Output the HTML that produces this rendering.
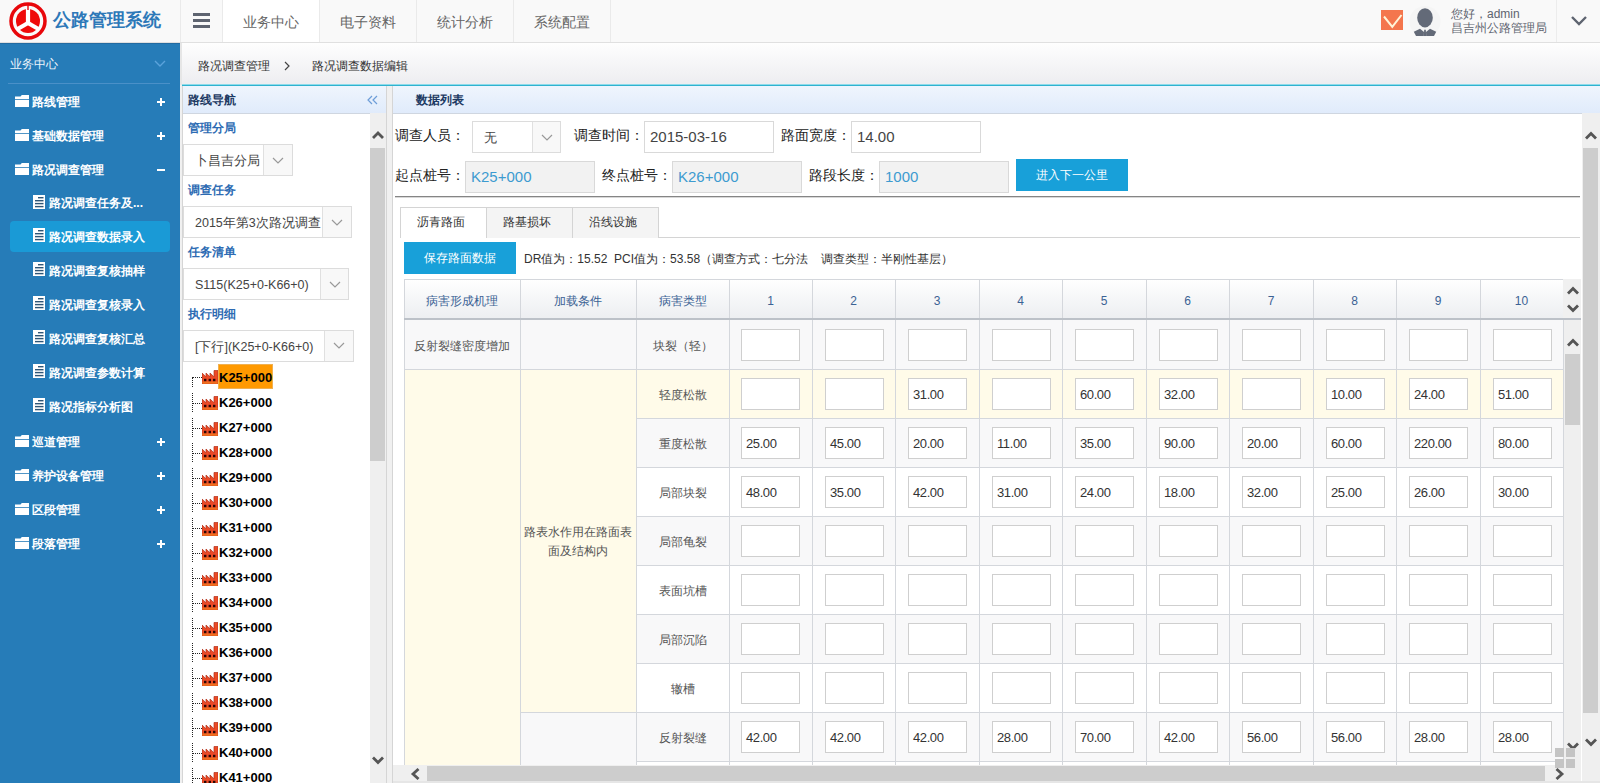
<!DOCTYPE html>
<html><head><meta charset="utf-8">
<style>
*{margin:0;padding:0;box-sizing:border-box}
html,body{width:1600px;height:783px;overflow:hidden;background:#f0f0f0;font-family:"Liberation Sans",sans-serif;color:#333}
.a{position:absolute}
#hdr{left:0;top:0;width:1600px;height:43px;background:#f9f9f9;border-bottom:1px solid #e0e0e0}
.tab{top:0;height:42px;border-left:1px solid #eaeaea;font-size:14px;color:#666;line-height:44px;text-align:center}
#side{left:0;top:43px;width:180px;height:740px;background:#267cb8}
.sm{left:0;width:180px;height:34px;color:#fff;font-size:12px;line-height:34px}
.sm .t{position:absolute;left:32px;top:0}
.sm .pl{position:absolute;left:155px;top:0;font-weight:bold;font-size:16px}
.fold{position:absolute;left:15px;top:12px;width:14px;height:12px}
.doc{position:absolute;left:33px;top:10px;width:12px;height:14px}
.sub .t{left:49px}
#crumb{left:180px;top:43px;width:1420px;height:42px;background:linear-gradient(#fefefe,#ededf0);border-left:2px solid #e6e6e6;font-size:12px;color:#333}
#cyan{left:182px;top:84px;width:1418px;height:2px;background:linear-gradient(#8ddbea 50%,#2fb2cf 50%)}
#lp{left:182px;top:86px;width:205px;height:697px;background:#fff;border-left:1px solid #d5d5d5;border-right:1px solid #d5d5d5}
#mp{left:392px;top:86px;width:1208px;height:697px;background:#fff;border-left:1px solid #d5d5d5}
.ph{position:absolute;left:0;top:0;right:0;background:linear-gradient(#eff5fd,#e0ebfb);border-bottom:1px solid #cfd6e0;height:28px;font-size:12px;font-weight:bold;color:#1d3a63;line-height:28px}
.lab{font-size:12px;font-weight:bold;color:#2d6bb3;line-height:16px}
.sel{border:1px solid #dcdcdc;background:#fff}
.st{left:11px;top:1px;line-height:30px;font-size:12.5px;color:#444;white-space:nowrap}
.sa{top:0;bottom:0;background:#f8f8f8;border-left:1px solid #e0e0e0}
.dv{width:1px;border-left:1px dotted #222}
.dh{height:1px;border-top:1px dotted #222}
.kt{font-size:13px;font-weight:bold;color:#000;line-height:16px;font-family:"Liberation Sans",sans-serif}
.flab{font-size:14px;line-height:20px;color:#222;white-space:nowrap}
.fin{border:1px solid #d9d9d9;background:#fff;font-size:15px;line-height:29px;padding-left:5px;color:#444;white-space:nowrap}
.ro{background:#f2f2f2;color:#3d9bd0}
.btn{background:#18a0d9;color:#fff;font-size:12px;text-align:center;line-height:31px}
.tb{height:31px;border:1px solid #d4d4d4;border-bottom:none;background:#f4f4f4;font-size:12px;padding-right:6px;color:#333;text-align:center;line-height:29px}
.tb.act{background:#fff;height:31px}
.th{font-size:12px;line-height:18px;color:#3b6294;text-align:center}
.td{font-size:12px;line-height:18px;color:#555;text-align:center;white-space:nowrap}
.ci{width:59px;height:32px;border:1px solid #cfcfcf;background:#fff;font-size:13px;letter-spacing:-0.4px;line-height:30px;padding-left:4px;padding-top:1px;color:#333}
</style></head><body>
<!-- HEADER -->
<div id="hdr" class="a">
  <svg class="a" style="left:8px;top:1px" width="40" height="40" viewBox="0 0 40 40">
    <circle cx="20" cy="20" r="12" fill="#ef0a0a"/>
    <g stroke="#fff" stroke-width="4.2" stroke-linecap="butt">
      <line x1="20" y1="22" x2="20" y2="6"/>
      <line x1="20" y1="22" x2="7" y2="29.5"/>
      <line x1="20" y1="22" x2="33" y2="29.5"/>
    </g>
    <circle cx="20" cy="20" r="17" fill="none" stroke="#e8070b" stroke-width="3.5"/>
    <line x1="20" y1="3" x2="20" y2="9" stroke="#e8070b" stroke-width="1.4"/>
  </svg>
  <div class="a" style="left:53px;top:8px;font-size:18px;font-weight:bold;color:#2d78b8;letter-spacing:0px;line-height:24px">公路管理系统</div>
  <div class="a tab" style="left:180px;width:42px;background:#f9f9f9">
    <div class="a" style="left:12px;top:13px;width:17px;height:3px;background:#5e6470"></div>
    <div class="a" style="left:12px;top:19px;width:17px;height:3px;background:#5e6470"></div>
    <div class="a" style="left:12px;top:25px;width:17px;height:3px;background:#5e6470"></div>
  </div>
  <div class="a tab" style="left:222px;width:97px;background:#fff">业务中心</div>
  <div class="a tab" style="left:319px;width:97px">电子资料</div>
  <div class="a tab" style="left:416px;width:97px">统计分析</div>
  <div class="a tab" style="left:513px;width:97px">系统配置</div>
  <div class="a tab" style="left:610px;width:1px"></div>
  <!-- mail -->
  <svg class="a" style="left:1381px;top:10px" width="22" height="20" viewBox="0 0 22 20">
    <rect width="22" height="20" fill="#f4764d"/>
    <polyline points="3,6.5 11.3,16.8 20.5,5" fill="none" stroke="#fff4d8" stroke-width="2"/>
  </svg>
  <!-- avatar -->
  <svg class="a" style="left:1409px;top:5px" width="32" height="33" viewBox="0 0 32 33">
    <circle cx="16" cy="16.5" r="15.5" fill="#f5f5f5"/>
    <ellipse cx="16" cy="12.8" rx="7.8" ry="9.6" fill="#636a78"/>
    <path d="M4.8 26.8 L11 23.8 L15 27 L14.8 31 L7 31 Z" fill="#636a78"/>
    <path d="M27.2 26.8 L21 23.8 L17 27 L17.2 31 L25 31 Z" fill="#636a78"/>
    <path d="M15.2 24.8 L16.8 24.8 L17.2 31 L14.8 31 Z" fill="#636a78"/>
  </svg>
  <div class="a" style="left:1451px;top:8px;font-size:12px;color:#5e6470;line-height:13.5px">您好，admin<br>昌吉州公路管理局</div>
  <div class="a" style="left:1556px;top:0;width:1px;height:42px;background:#ececec"></div>
  <svg class="a" style="left:1570px;top:15px" width="18" height="12" viewBox="0 0 18 12">
    <polyline points="2,2 9,9 16,2" fill="none" stroke="#5e6470" stroke-width="2.4"/>
  </svg>
</div>

<!-- SIDEBAR -->
<div id="side" class="a">
  <div class="a" style="left:0;top:0;width:180px;height:1px;background:#236ba2"></div>
  <div class="a" style="left:10px;top:12px;color:#eef5fc;font-size:12px;line-height:18px">业务中心</div>
  <svg class="a" style="left:154px;top:17px" width="12" height="8" viewBox="0 0 12 8"><polyline points="1,1 6,6 11,1" fill="none" stroke="#5ba3db" stroke-width="1.4"/></svg>
  <div class="a" style="left:8px;top:40px;width:162px;height:1px;background:#4a90c8"></div>
  <svg class="a" style="left:15px;top:52px" width="14" height="12" viewBox="0 0 14 12"><path d="M0 1.6 H5.5 L6.8 0 H14 V4 H0 Z" fill="#fff"/><rect x="0" y="4.8" width="14" height="7.2" fill="#fff"/></svg>
  <div class="a" style="left:32px;top:51.0px;font-size:12px;line-height:16px;color:#fff;font-weight:bold">路线管理</div>
  <div class="a" style="left:157px;top:58.0px;width:8px;height:2px;background:#fff"></div><div class="a" style="left:160px;top:55.0px;width:2px;height:8px;background:#fff"></div>
  <svg class="a" style="left:15px;top:86px" width="14" height="12" viewBox="0 0 14 12"><path d="M0 1.6 H5.5 L6.8 0 H14 V4 H0 Z" fill="#fff"/><rect x="0" y="4.8" width="14" height="7.2" fill="#fff"/></svg>
  <div class="a" style="left:32px;top:85.0px;font-size:12px;line-height:16px;color:#fff;font-weight:bold">基础数据管理</div>
  <div class="a" style="left:157px;top:92.0px;width:8px;height:2px;background:#fff"></div><div class="a" style="left:160px;top:89.0px;width:2px;height:8px;background:#fff"></div>
  <svg class="a" style="left:15px;top:120px" width="14" height="12" viewBox="0 0 14 12"><path d="M0 1.6 H5.5 L6.8 0 H14 V4 H0 Z" fill="#fff"/><rect x="0" y="4.8" width="14" height="7.2" fill="#fff"/></svg>
  <div class="a" style="left:32px;top:119.0px;font-size:12px;line-height:16px;color:#fff;font-weight:bold">路况调查管理</div>
  <div class="a" style="left:157px;top:126.0px;width:8px;height:2px;background:#fff"></div>
  <svg class="a" style="left:33px;top:152px" width="12" height="14" viewBox="0 0 12 14"><rect width="12" height="14" fill="#fff"/><rect x="5" y="2" width="5.5" height="1.4" fill="#2f5677"/><rect x="2" y="5" width="8.5" height="1.4" fill="#2f5677"/><rect x="2" y="7.9" width="8.5" height="1.4" fill="#2f5677"/><rect x="2" y="10.9" width="8.5" height="1.4" fill="#2f5677"/></svg>
  <div class="a" style="left:49px;top:152.0px;font-size:12px;line-height:16px;color:#fff;font-weight:bold">路况调查任务及...</div>
  <div class="a" style="left:10px;top:177.5px;width:160px;height:31px;border-radius:4px;background:#1a9ad6"></div>
  <svg class="a" style="left:33px;top:185px" width="12" height="14" viewBox="0 0 12 14"><rect width="12" height="14" fill="#fff"/><rect x="5" y="2" width="5.5" height="1.4" fill="#2f5677"/><rect x="2" y="5" width="8.5" height="1.4" fill="#2f5677"/><rect x="2" y="7.9" width="8.5" height="1.4" fill="#2f5677"/><rect x="2" y="10.9" width="8.5" height="1.4" fill="#2f5677"/></svg>
  <div class="a" style="left:49px;top:185.5px;font-size:12px;line-height:16px;color:#fff;font-weight:bold">路况调查数据录入</div>
  <svg class="a" style="left:33px;top:219px" width="12" height="14" viewBox="0 0 12 14"><rect width="12" height="14" fill="#fff"/><rect x="5" y="2" width="5.5" height="1.4" fill="#2f5677"/><rect x="2" y="5" width="8.5" height="1.4" fill="#2f5677"/><rect x="2" y="7.9" width="8.5" height="1.4" fill="#2f5677"/><rect x="2" y="10.9" width="8.5" height="1.4" fill="#2f5677"/></svg>
  <div class="a" style="left:49px;top:219.5px;font-size:12px;line-height:16px;color:#fff;font-weight:bold">路况调查复核抽样</div>
  <svg class="a" style="left:33px;top:253px" width="12" height="14" viewBox="0 0 12 14"><rect width="12" height="14" fill="#fff"/><rect x="5" y="2" width="5.5" height="1.4" fill="#2f5677"/><rect x="2" y="5" width="8.5" height="1.4" fill="#2f5677"/><rect x="2" y="7.9" width="8.5" height="1.4" fill="#2f5677"/><rect x="2" y="10.9" width="8.5" height="1.4" fill="#2f5677"/></svg>
  <div class="a" style="left:49px;top:253.5px;font-size:12px;line-height:16px;color:#fff;font-weight:bold">路况调查复核录入</div>
  <svg class="a" style="left:33px;top:287px" width="12" height="14" viewBox="0 0 12 14"><rect width="12" height="14" fill="#fff"/><rect x="5" y="2" width="5.5" height="1.4" fill="#2f5677"/><rect x="2" y="5" width="8.5" height="1.4" fill="#2f5677"/><rect x="2" y="7.9" width="8.5" height="1.4" fill="#2f5677"/><rect x="2" y="10.9" width="8.5" height="1.4" fill="#2f5677"/></svg>
  <div class="a" style="left:49px;top:287.5px;font-size:12px;line-height:16px;color:#fff;font-weight:bold">路况调查复核汇总</div>
  <svg class="a" style="left:33px;top:321px" width="12" height="14" viewBox="0 0 12 14"><rect width="12" height="14" fill="#fff"/><rect x="5" y="2" width="5.5" height="1.4" fill="#2f5677"/><rect x="2" y="5" width="8.5" height="1.4" fill="#2f5677"/><rect x="2" y="7.9" width="8.5" height="1.4" fill="#2f5677"/><rect x="2" y="10.9" width="8.5" height="1.4" fill="#2f5677"/></svg>
  <div class="a" style="left:49px;top:321.5px;font-size:12px;line-height:16px;color:#fff;font-weight:bold">路况调查参数计算</div>
  <svg class="a" style="left:33px;top:355px" width="12" height="14" viewBox="0 0 12 14"><rect width="12" height="14" fill="#fff"/><rect x="5" y="2" width="5.5" height="1.4" fill="#2f5677"/><rect x="2" y="5" width="8.5" height="1.4" fill="#2f5677"/><rect x="2" y="7.9" width="8.5" height="1.4" fill="#2f5677"/><rect x="2" y="10.9" width="8.5" height="1.4" fill="#2f5677"/></svg>
  <div class="a" style="left:49px;top:355.5px;font-size:12px;line-height:16px;color:#fff;font-weight:bold">路况指标分析图</div>
  <svg class="a" style="left:15px;top:392px" width="14" height="12" viewBox="0 0 14 12"><path d="M0 1.6 H5.5 L6.8 0 H14 V4 H0 Z" fill="#fff"/><rect x="0" y="4.8" width="14" height="7.2" fill="#fff"/></svg>
  <div class="a" style="left:32px;top:391px;font-size:12px;line-height:16px;color:#fff;font-weight:bold">巡道管理</div>
  <div class="a" style="left:157px;top:398px;width:8px;height:2px;background:#fff"></div><div class="a" style="left:160px;top:395px;width:2px;height:8px;background:#fff"></div>
  <svg class="a" style="left:15px;top:426px" width="14" height="12" viewBox="0 0 14 12"><path d="M0 1.6 H5.5 L6.8 0 H14 V4 H0 Z" fill="#fff"/><rect x="0" y="4.8" width="14" height="7.2" fill="#fff"/></svg>
  <div class="a" style="left:32px;top:425px;font-size:12px;line-height:16px;color:#fff;font-weight:bold">养护设备管理</div>
  <div class="a" style="left:157px;top:432px;width:8px;height:2px;background:#fff"></div><div class="a" style="left:160px;top:429px;width:2px;height:8px;background:#fff"></div>
  <svg class="a" style="left:15px;top:460px" width="14" height="12" viewBox="0 0 14 12"><path d="M0 1.6 H5.5 L6.8 0 H14 V4 H0 Z" fill="#fff"/><rect x="0" y="4.8" width="14" height="7.2" fill="#fff"/></svg>
  <div class="a" style="left:32px;top:459px;font-size:12px;line-height:16px;color:#fff;font-weight:bold">区段管理</div>
  <div class="a" style="left:157px;top:466px;width:8px;height:2px;background:#fff"></div><div class="a" style="left:160px;top:463px;width:2px;height:8px;background:#fff"></div>
  <svg class="a" style="left:15px;top:494px" width="14" height="12" viewBox="0 0 14 12"><path d="M0 1.6 H5.5 L6.8 0 H14 V4 H0 Z" fill="#fff"/><rect x="0" y="4.8" width="14" height="7.2" fill="#fff"/></svg>
  <div class="a" style="left:32px;top:493px;font-size:12px;line-height:16px;color:#fff;font-weight:bold">段落管理</div>
  <div class="a" style="left:157px;top:500px;width:8px;height:2px;background:#fff"></div><div class="a" style="left:160px;top:497px;width:2px;height:8px;background:#fff"></div>
</div>

<!-- BREADCRUMB -->
<div id="crumb" class="a">
  <div class="a" style="left:16px;top:15px;line-height:16px">路况调查管理</div>
  <svg class="a" style="left:101px;top:18px" width="8" height="10" viewBox="0 0 8 10"><polyline points="2,1 6,5 2,9" fill="none" stroke="#444" stroke-width="1.2"/></svg>
  <div class="a" style="left:130px;top:15px;line-height:16px">路况调查数据编辑</div>
</div>
<div id="cyan" class="a"></div>

<!-- LEFT PANEL -->
<div id="lp" class="a">
  <div class="ph"><span style="position:absolute;left:5px">路线导航</span>
  <svg class="a" style="left:184px;top:9px" width="11" height="10" viewBox="0 0 11 10"><polyline points="5,1 1,5 5,9" fill="none" stroke="#6d9dd8" stroke-width="1.2"/><polyline points="10,1 6,5 10,9" fill="none" stroke="#6d9dd8" stroke-width="1.2"/></svg>
  </div>
  <div class="a lab" style="left:5px;top:34px">管理分局</div>
  <div class="a sel" style="left:0px;top:58px;width:110px;height:32px"><div class="a st">卜昌吉分局</div><div class="a sa" style="left:79px;width:29px"><svg class="a" style="left:8px;top:12px" width="12" height="7" viewBox="0 0 12 7"><polyline points="1,1 6,6 11,1" fill="none" stroke="#999" stroke-width="1.2"/></svg></div></div>
  <div class="a lab" style="left:5px;top:96px">调查任务</div>
  <div class="a sel" style="left:0px;top:120px;width:169px;height:32px"><div class="a st">2015年第3次路况调查</div><div class="a sa" style="left:138px;width:29px"><svg class="a" style="left:8px;top:12px" width="12" height="7" viewBox="0 0 12 7"><polyline points="1,1 6,6 11,1" fill="none" stroke="#999" stroke-width="1.2"/></svg></div></div>
  <div class="a lab" style="left:5px;top:158px">任务清单</div>
  <div class="a sel" style="left:0px;top:182px;width:166px;height:32px"><div class="a st">S115(K25+0-K66+0)</div><div class="a sa" style="left:136px;width:28px"><svg class="a" style="left:8px;top:12px" width="12" height="7" viewBox="0 0 12 7"><polyline points="1,1 6,6 11,1" fill="none" stroke="#999" stroke-width="1.2"/></svg></div></div>
  <div class="a lab" style="left:5px;top:220px">执行明细</div>
  <div class="a sel" style="left:0px;top:244px;width:171px;height:32px"><div class="a st">[下行](K25+0-K66+0)</div><div class="a sa" style="left:140px;width:29px"><svg class="a" style="left:8px;top:11px" width="12" height="7" viewBox="0 0 12 7"><polyline points="1,1 6,6 11,1" fill="none" stroke="#999" stroke-width="1.2"/></svg></div></div>
  <div class="a dv" style="left:9px;top:291px;height:10px"></div>
  <div class="a dh" style="left:10px;top:291px;width:9px"></div>
  <svg class="a" style="left:19px;top:284px" width="16" height="14" viewBox="0 0 16 14"><path d="M0 14 V3 L4 6.8 V3 L8 6.8 V3 L12 6.8 V0.5 H16 V14 Z" fill="#ec4a26" stroke="#b0301a" stroke-width="0.7"/><rect x="0.3" y="11.5" width="15.4" height="2.2" fill="#f0711e"/><rect x="2" y="8.8" width="2.4" height="2.4" fill="#2a0805"/><rect x="6.6" y="8.8" width="2.4" height="2.4" fill="#2a0805"/><rect x="11" y="8.8" width="2.4" height="2.4" fill="#2a0805"/></svg>
  <div class="a" style="left:35px;top:278.0px;width:55px;height:25px;background:#ff9900;border:1px solid #f0b050"></div>
  <div class="a kt" style="left:36px;top:283.5px">K25+000</div>
  <div class="a dv" style="left:9px;top:306.5px;height:19px"></div>
  <div class="a dh" style="left:10px;top:317.0px;width:9px"></div>
  <svg class="a" style="left:19px;top:310px" width="16" height="14" viewBox="0 0 16 14"><path d="M0 14 V3 L4 6.8 V3 L8 6.8 V3 L12 6.8 V0.5 H16 V14 Z" fill="#ec4a26" stroke="#b0301a" stroke-width="0.7"/><rect x="0.3" y="11.5" width="15.4" height="2.2" fill="#f0711e"/><rect x="2" y="8.8" width="2.4" height="2.4" fill="#2a0805"/><rect x="6.6" y="8.8" width="2.4" height="2.4" fill="#2a0805"/><rect x="11" y="8.8" width="2.4" height="2.4" fill="#2a0805"/></svg>
  <div class="a kt" style="left:36px;top:308.5px">K26+000</div>
  <div class="a dv" style="left:9px;top:331.5px;height:19px"></div>
  <div class="a dh" style="left:10px;top:342.0px;width:9px"></div>
  <svg class="a" style="left:19px;top:336px" width="16" height="14" viewBox="0 0 16 14"><path d="M0 14 V3 L4 6.8 V3 L8 6.8 V3 L12 6.8 V0.5 H16 V14 Z" fill="#ec4a26" stroke="#b0301a" stroke-width="0.7"/><rect x="0.3" y="11.5" width="15.4" height="2.2" fill="#f0711e"/><rect x="2" y="8.8" width="2.4" height="2.4" fill="#2a0805"/><rect x="6.6" y="8.8" width="2.4" height="2.4" fill="#2a0805"/><rect x="11" y="8.8" width="2.4" height="2.4" fill="#2a0805"/></svg>
  <div class="a kt" style="left:36px;top:333.5px">K27+000</div>
  <div class="a dv" style="left:9px;top:356.5px;height:19px"></div>
  <div class="a dh" style="left:10px;top:367.0px;width:9px"></div>
  <svg class="a" style="left:19px;top:360px" width="16" height="14" viewBox="0 0 16 14"><path d="M0 14 V3 L4 6.8 V3 L8 6.8 V3 L12 6.8 V0.5 H16 V14 Z" fill="#ec4a26" stroke="#b0301a" stroke-width="0.7"/><rect x="0.3" y="11.5" width="15.4" height="2.2" fill="#f0711e"/><rect x="2" y="8.8" width="2.4" height="2.4" fill="#2a0805"/><rect x="6.6" y="8.8" width="2.4" height="2.4" fill="#2a0805"/><rect x="11" y="8.8" width="2.4" height="2.4" fill="#2a0805"/></svg>
  <div class="a kt" style="left:36px;top:358.5px">K28+000</div>
  <div class="a dv" style="left:9px;top:381.5px;height:19px"></div>
  <div class="a dh" style="left:10px;top:392.0px;width:9px"></div>
  <svg class="a" style="left:19px;top:386px" width="16" height="14" viewBox="0 0 16 14"><path d="M0 14 V3 L4 6.8 V3 L8 6.8 V3 L12 6.8 V0.5 H16 V14 Z" fill="#ec4a26" stroke="#b0301a" stroke-width="0.7"/><rect x="0.3" y="11.5" width="15.4" height="2.2" fill="#f0711e"/><rect x="2" y="8.8" width="2.4" height="2.4" fill="#2a0805"/><rect x="6.6" y="8.8" width="2.4" height="2.4" fill="#2a0805"/><rect x="11" y="8.8" width="2.4" height="2.4" fill="#2a0805"/></svg>
  <div class="a kt" style="left:36px;top:383.5px">K29+000</div>
  <div class="a dv" style="left:9px;top:406.5px;height:19px"></div>
  <div class="a dh" style="left:10px;top:417.0px;width:9px"></div>
  <svg class="a" style="left:19px;top:410px" width="16" height="14" viewBox="0 0 16 14"><path d="M0 14 V3 L4 6.8 V3 L8 6.8 V3 L12 6.8 V0.5 H16 V14 Z" fill="#ec4a26" stroke="#b0301a" stroke-width="0.7"/><rect x="0.3" y="11.5" width="15.4" height="2.2" fill="#f0711e"/><rect x="2" y="8.8" width="2.4" height="2.4" fill="#2a0805"/><rect x="6.6" y="8.8" width="2.4" height="2.4" fill="#2a0805"/><rect x="11" y="8.8" width="2.4" height="2.4" fill="#2a0805"/></svg>
  <div class="a kt" style="left:36px;top:408.5px">K30+000</div>
  <div class="a dv" style="left:9px;top:431.5px;height:19px"></div>
  <div class="a dh" style="left:10px;top:442.0px;width:9px"></div>
  <svg class="a" style="left:19px;top:436px" width="16" height="14" viewBox="0 0 16 14"><path d="M0 14 V3 L4 6.8 V3 L8 6.8 V3 L12 6.8 V0.5 H16 V14 Z" fill="#ec4a26" stroke="#b0301a" stroke-width="0.7"/><rect x="0.3" y="11.5" width="15.4" height="2.2" fill="#f0711e"/><rect x="2" y="8.8" width="2.4" height="2.4" fill="#2a0805"/><rect x="6.6" y="8.8" width="2.4" height="2.4" fill="#2a0805"/><rect x="11" y="8.8" width="2.4" height="2.4" fill="#2a0805"/></svg>
  <div class="a kt" style="left:36px;top:433.5px">K31+000</div>
  <div class="a dv" style="left:9px;top:456.5px;height:19px"></div>
  <div class="a dh" style="left:10px;top:467.0px;width:9px"></div>
  <svg class="a" style="left:19px;top:460px" width="16" height="14" viewBox="0 0 16 14"><path d="M0 14 V3 L4 6.8 V3 L8 6.8 V3 L12 6.8 V0.5 H16 V14 Z" fill="#ec4a26" stroke="#b0301a" stroke-width="0.7"/><rect x="0.3" y="11.5" width="15.4" height="2.2" fill="#f0711e"/><rect x="2" y="8.8" width="2.4" height="2.4" fill="#2a0805"/><rect x="6.6" y="8.8" width="2.4" height="2.4" fill="#2a0805"/><rect x="11" y="8.8" width="2.4" height="2.4" fill="#2a0805"/></svg>
  <div class="a kt" style="left:36px;top:458.5px">K32+000</div>
  <div class="a dv" style="left:9px;top:481.5px;height:19px"></div>
  <div class="a dh" style="left:10px;top:492.0px;width:9px"></div>
  <svg class="a" style="left:19px;top:486px" width="16" height="14" viewBox="0 0 16 14"><path d="M0 14 V3 L4 6.8 V3 L8 6.8 V3 L12 6.8 V0.5 H16 V14 Z" fill="#ec4a26" stroke="#b0301a" stroke-width="0.7"/><rect x="0.3" y="11.5" width="15.4" height="2.2" fill="#f0711e"/><rect x="2" y="8.8" width="2.4" height="2.4" fill="#2a0805"/><rect x="6.6" y="8.8" width="2.4" height="2.4" fill="#2a0805"/><rect x="11" y="8.8" width="2.4" height="2.4" fill="#2a0805"/></svg>
  <div class="a kt" style="left:36px;top:483.5px">K33+000</div>
  <div class="a dv" style="left:9px;top:506.5px;height:19px"></div>
  <div class="a dh" style="left:10px;top:517.0px;width:9px"></div>
  <svg class="a" style="left:19px;top:510px" width="16" height="14" viewBox="0 0 16 14"><path d="M0 14 V3 L4 6.8 V3 L8 6.8 V3 L12 6.8 V0.5 H16 V14 Z" fill="#ec4a26" stroke="#b0301a" stroke-width="0.7"/><rect x="0.3" y="11.5" width="15.4" height="2.2" fill="#f0711e"/><rect x="2" y="8.8" width="2.4" height="2.4" fill="#2a0805"/><rect x="6.6" y="8.8" width="2.4" height="2.4" fill="#2a0805"/><rect x="11" y="8.8" width="2.4" height="2.4" fill="#2a0805"/></svg>
  <div class="a kt" style="left:36px;top:508.5px">K34+000</div>
  <div class="a dv" style="left:9px;top:531.5px;height:19px"></div>
  <div class="a dh" style="left:10px;top:542.0px;width:9px"></div>
  <svg class="a" style="left:19px;top:536px" width="16" height="14" viewBox="0 0 16 14"><path d="M0 14 V3 L4 6.8 V3 L8 6.8 V3 L12 6.8 V0.5 H16 V14 Z" fill="#ec4a26" stroke="#b0301a" stroke-width="0.7"/><rect x="0.3" y="11.5" width="15.4" height="2.2" fill="#f0711e"/><rect x="2" y="8.8" width="2.4" height="2.4" fill="#2a0805"/><rect x="6.6" y="8.8" width="2.4" height="2.4" fill="#2a0805"/><rect x="11" y="8.8" width="2.4" height="2.4" fill="#2a0805"/></svg>
  <div class="a kt" style="left:36px;top:533.5px">K35+000</div>
  <div class="a dv" style="left:9px;top:556.5px;height:19px"></div>
  <div class="a dh" style="left:10px;top:567.0px;width:9px"></div>
  <svg class="a" style="left:19px;top:560px" width="16" height="14" viewBox="0 0 16 14"><path d="M0 14 V3 L4 6.8 V3 L8 6.8 V3 L12 6.8 V0.5 H16 V14 Z" fill="#ec4a26" stroke="#b0301a" stroke-width="0.7"/><rect x="0.3" y="11.5" width="15.4" height="2.2" fill="#f0711e"/><rect x="2" y="8.8" width="2.4" height="2.4" fill="#2a0805"/><rect x="6.6" y="8.8" width="2.4" height="2.4" fill="#2a0805"/><rect x="11" y="8.8" width="2.4" height="2.4" fill="#2a0805"/></svg>
  <div class="a kt" style="left:36px;top:558.5px">K36+000</div>
  <div class="a dv" style="left:9px;top:581.5px;height:19px"></div>
  <div class="a dh" style="left:10px;top:592.0px;width:9px"></div>
  <svg class="a" style="left:19px;top:586px" width="16" height="14" viewBox="0 0 16 14"><path d="M0 14 V3 L4 6.8 V3 L8 6.8 V3 L12 6.8 V0.5 H16 V14 Z" fill="#ec4a26" stroke="#b0301a" stroke-width="0.7"/><rect x="0.3" y="11.5" width="15.4" height="2.2" fill="#f0711e"/><rect x="2" y="8.8" width="2.4" height="2.4" fill="#2a0805"/><rect x="6.6" y="8.8" width="2.4" height="2.4" fill="#2a0805"/><rect x="11" y="8.8" width="2.4" height="2.4" fill="#2a0805"/></svg>
  <div class="a kt" style="left:36px;top:583.5px">K37+000</div>
  <div class="a dv" style="left:9px;top:606.5px;height:19px"></div>
  <div class="a dh" style="left:10px;top:617.0px;width:9px"></div>
  <svg class="a" style="left:19px;top:610px" width="16" height="14" viewBox="0 0 16 14"><path d="M0 14 V3 L4 6.8 V3 L8 6.8 V3 L12 6.8 V0.5 H16 V14 Z" fill="#ec4a26" stroke="#b0301a" stroke-width="0.7"/><rect x="0.3" y="11.5" width="15.4" height="2.2" fill="#f0711e"/><rect x="2" y="8.8" width="2.4" height="2.4" fill="#2a0805"/><rect x="6.6" y="8.8" width="2.4" height="2.4" fill="#2a0805"/><rect x="11" y="8.8" width="2.4" height="2.4" fill="#2a0805"/></svg>
  <div class="a kt" style="left:36px;top:608.5px">K38+000</div>
  <div class="a dv" style="left:9px;top:631.5px;height:19px"></div>
  <div class="a dh" style="left:10px;top:642.0px;width:9px"></div>
  <svg class="a" style="left:19px;top:636px" width="16" height="14" viewBox="0 0 16 14"><path d="M0 14 V3 L4 6.8 V3 L8 6.8 V3 L12 6.8 V0.5 H16 V14 Z" fill="#ec4a26" stroke="#b0301a" stroke-width="0.7"/><rect x="0.3" y="11.5" width="15.4" height="2.2" fill="#f0711e"/><rect x="2" y="8.8" width="2.4" height="2.4" fill="#2a0805"/><rect x="6.6" y="8.8" width="2.4" height="2.4" fill="#2a0805"/><rect x="11" y="8.8" width="2.4" height="2.4" fill="#2a0805"/></svg>
  <div class="a kt" style="left:36px;top:633.5px">K39+000</div>
  <div class="a dv" style="left:9px;top:656.5px;height:19px"></div>
  <div class="a dh" style="left:10px;top:667.0px;width:9px"></div>
  <svg class="a" style="left:19px;top:660px" width="16" height="14" viewBox="0 0 16 14"><path d="M0 14 V3 L4 6.8 V3 L8 6.8 V3 L12 6.8 V0.5 H16 V14 Z" fill="#ec4a26" stroke="#b0301a" stroke-width="0.7"/><rect x="0.3" y="11.5" width="15.4" height="2.2" fill="#f0711e"/><rect x="2" y="8.8" width="2.4" height="2.4" fill="#2a0805"/><rect x="6.6" y="8.8" width="2.4" height="2.4" fill="#2a0805"/><rect x="11" y="8.8" width="2.4" height="2.4" fill="#2a0805"/></svg>
  <div class="a kt" style="left:36px;top:658.5px">K40+000</div>
  <div class="a dv" style="left:9px;top:681.5px;height:19px"></div>
  <div class="a dh" style="left:10px;top:692.0px;width:9px"></div>
  <svg class="a" style="left:19px;top:686px" width="16" height="14" viewBox="0 0 16 14"><path d="M0 14 V3 L4 6.8 V3 L8 6.8 V3 L12 6.8 V0.5 H16 V14 Z" fill="#ec4a26" stroke="#b0301a" stroke-width="0.7"/><rect x="0.3" y="11.5" width="15.4" height="2.2" fill="#f0711e"/><rect x="2" y="8.8" width="2.4" height="2.4" fill="#2a0805"/><rect x="6.6" y="8.8" width="2.4" height="2.4" fill="#2a0805"/><rect x="11" y="8.8" width="2.4" height="2.4" fill="#2a0805"/></svg>
  <div class="a kt" style="left:36px;top:683.5px">K41+000</div>
  <div class="a" style="left:187px;top:27px;width:16px;height:670px;background:#efefef"></div>
  <div class="a" style="left:187px;top:62px;width:15px;height:313px;background:#cdcdcd"></div>
  <svg class="a" style="left:189px;top:44px" width="12" height="9" viewBox="0 0 12 9"><polyline points="1,8 6,3 11,8" fill="none" stroke="#555" stroke-width="2.8"/></svg>
  <svg class="a" style="left:189px;top:670px" width="12" height="9" viewBox="0 0 12 9"><polyline points="1,1.5 6,6.5 11,1.5" fill="none" stroke="#555" stroke-width="2.8"/></svg>
</div>

<!-- MAIN PANEL -->
<div id="mp" class="a">
  <div class="ph"><span style="position:absolute;left:23px">数据列表</span></div>
  <div class="a flab" style="left:2px;top:38.5px">调查人员：</div>
  <div class="a sel" style="left:79px;top:35px;width:89px;height:32px"><div class="a st" style="left:11px;font-size:13px;top:1px">无</div><div class="a sa" style="left:59px;width:28px"><svg class="a" style="left:8px;top:12px" width="12" height="7" viewBox="0 0 12 7"><polyline points="1,1 6,6 11,1" fill="none" stroke="#999" stroke-width="1.2"/></svg></div></div>
  <div class="a flab" style="left:181px;top:38.5px">调查时间：</div>
  <div class="a fin" style="left:251px;top:35px;width:130px;height:32px">2015-03-16</div>
  <div class="a flab" style="left:388px;top:38.5px">路面宽度：</div>
  <div class="a fin" style="left:458px;top:35px;width:130px;height:32px">14.00</div>
  <div class="a flab" style="left:2px;top:79.0px">起点桩号：</div>
  <div class="a fin ro" style="left:72px;top:75px;width:130px;height:32px">K25+000</div>
  <div class="a flab" style="left:209px;top:79.0px">终点桩号：</div>
  <div class="a fin ro" style="left:279px;top:75px;width:130px;height:32px">K26+000</div>
  <div class="a flab" style="left:416px;top:79.0px">路段长度：</div>
  <div class="a fin ro" style="left:486px;top:75px;width:130px;height:32px">1000</div>
  <div class="a btn" style="left:623px;top:73px;width:112px;height:32px;line-height:33px">进入下一公里</div>
  <div class="a" style="left:2px;top:110px;width:1185px;height:2px;background:linear-gradient(#858585 50%,#d8d8d8 50%)"></div>
  <div class="a" style="left:265px;top:151px;width:922px;height:1px;background:#d4d4d4"></div>
  <div class="a tb act" style="left:7px;top:121px;width:87px">沥青路面</div>
  <div class="a tb" style="left:93px;top:121px;width:87px">路基损坏</div>
  <div class="a tb" style="left:179px;top:121px;width:87px">沿线设施</div>
  <div class="a btn" style="left:11px;top:156px;width:112px;height:32px;line-height:33px">保存路面数据</div>
  <div class="a" style="left:131px;top:165px;font-size:12px;line-height:16px;color:#333;white-space:nowrap">DR值为：15.52&nbsp; PCI值为：53.58（调查方式：七分法&nbsp;&nbsp;&nbsp; 调查类型：半刚性基层）</div>
  <div class="a" style="left:243.0px;top:233.0px;width:927.0px;height:50.0px;background:#f8f8f9"></div>
  <div class="a" style="left:243.0px;top:283.0px;width:927.0px;height:49.0px;background:#fffbe9"></div>
  <div class="a" style="left:243.0px;top:332.0px;width:927.0px;height:49.0px;background:#f8f8f9"></div>
  <div class="a" style="left:243.0px;top:381.0px;width:927.0px;height:49.0px;background:#ffffff"></div>
  <div class="a" style="left:243.0px;top:430.0px;width:927.0px;height:49.0px;background:#f8f8f9"></div>
  <div class="a" style="left:243.0px;top:479.0px;width:927.0px;height:49.0px;background:#ffffff"></div>
  <div class="a" style="left:243.0px;top:528.0px;width:927.0px;height:49.0px;background:#f8f8f9"></div>
  <div class="a" style="left:243.0px;top:577.0px;width:927.0px;height:49.0px;background:#ffffff"></div>
  <div class="a" style="left:243.0px;top:626.0px;width:927.0px;height:49.0px;background:#f8f8f9"></div>
  <div class="a" style="left:243.0px;top:675.0px;width:927.0px;height:4.0px;background:#ffffff"></div>
  <div class="a" style="left:11.0px;top:283.0px;width:116.0px;height:396.0px;background:#fffbe9"></div>
  <div class="a" style="left:11.0px;top:233.0px;width:232.0px;height:50.0px;background:#f8f8f9"></div>
  <div class="a" style="left:127.0px;top:283.0px;width:116.0px;height:343.0px;background:#fffbe9"></div>
  <div class="a" style="left:127.0px;top:626.0px;width:116.0px;height:53.0px;background:#f8f8f9"></div>
  <div class="a" style="left:11.0px;top:193.0px;width:1159.0px;height:40.0px;background:linear-gradient(#ffffff,#eceef1)"></div>
  <div class="a" style="left:11.0px;top:193.0px;width:1.0px;height:486.0px;background:#d4d7dc"></div>
  <div class="a" style="left:127.0px;top:193.0px;width:1.0px;height:486.0px;background:#d4d7dc"></div>
  <div class="a" style="left:243.0px;top:193.0px;width:1.0px;height:486.0px;background:#d4d7dc"></div>
  <div class="a" style="left:336.0px;top:193.0px;width:1.0px;height:486.0px;background:#d4d7dc"></div>
  <div class="a" style="left:419.0px;top:193.0px;width:1.0px;height:486.0px;background:#d4d7dc"></div>
  <div class="a" style="left:502.0px;top:193.0px;width:1.0px;height:486.0px;background:#d4d7dc"></div>
  <div class="a" style="left:586.0px;top:193.0px;width:1.0px;height:486.0px;background:#d4d7dc"></div>
  <div class="a" style="left:669.0px;top:193.0px;width:1.0px;height:486.0px;background:#d4d7dc"></div>
  <div class="a" style="left:753.0px;top:193.0px;width:1.0px;height:486.0px;background:#d4d7dc"></div>
  <div class="a" style="left:836.0px;top:193.0px;width:1.0px;height:486.0px;background:#d4d7dc"></div>
  <div class="a" style="left:920.0px;top:193.0px;width:1.0px;height:486.0px;background:#d4d7dc"></div>
  <div class="a" style="left:1003.0px;top:193.0px;width:1.0px;height:486.0px;background:#d4d7dc"></div>
  <div class="a" style="left:1087.0px;top:193.0px;width:1.0px;height:486.0px;background:#d4d7dc"></div>
  <div class="a" style="left:1170.0px;top:193.0px;width:1.0px;height:486.0px;background:#d4d7dc"></div>
  <div class="a" style="left:11.0px;top:193.0px;width:1159.0px;height:1.0px;background:#d4d7dc"></div>
  <div class="a" style="left:11.0px;top:232.0px;width:1159.0px;height:2.0px;background:#bcc1c8"></div>
  <div class="a" style="left:11.0px;top:283.0px;width:1159.0px;height:1.0px;background:#d4d7dc"></div>
  <div class="a" style="left:243.0px;top:332.0px;width:927.0px;height:1.0px;background:#d4d7dc"></div>
  <div class="a" style="left:243.0px;top:381.0px;width:927.0px;height:1.0px;background:#d4d7dc"></div>
  <div class="a" style="left:243.0px;top:430.0px;width:927.0px;height:1.0px;background:#d4d7dc"></div>
  <div class="a" style="left:243.0px;top:479.0px;width:927.0px;height:1.0px;background:#d4d7dc"></div>
  <div class="a" style="left:243.0px;top:528.0px;width:927.0px;height:1.0px;background:#d4d7dc"></div>
  <div class="a" style="left:243.0px;top:577.0px;width:927.0px;height:1.0px;background:#d4d7dc"></div>
  <div class="a" style="left:127.0px;top:626.0px;width:1043.0px;height:1.0px;background:#d4d7dc"></div>
  <div class="a" style="left:243.0px;top:675.0px;width:927.0px;height:1.0px;background:#d4d7dc"></div>
  <div class="a th" style="left:11px;top:206px;width:116px">病害形成机理</div>
  <div class="a th" style="left:127px;top:206px;width:116px">加载条件</div>
  <div class="a th" style="left:243px;top:206px;width:93px">病害类型</div>
  <div class="a th" style="left:336px;top:206px;width:83px">1</div>
  <div class="a th" style="left:419px;top:206px;width:83px">2</div>
  <div class="a th" style="left:502px;top:206px;width:84px">3</div>
  <div class="a th" style="left:586px;top:206px;width:83px">4</div>
  <div class="a th" style="left:669px;top:206px;width:84px">5</div>
  <div class="a th" style="left:753px;top:206px;width:83px">6</div>
  <div class="a th" style="left:836px;top:206px;width:84px">7</div>
  <div class="a th" style="left:920px;top:206px;width:83px">8</div>
  <div class="a th" style="left:1003px;top:206px;width:84px">9</div>
  <div class="a th" style="left:1087px;top:206px;width:83px">10</div>
  <div class="a td" style="left:11px;top:251px;width:116px">反射裂缝密度增加</div>
  <div class="a td" style="left:127px;top:437px;width:116px;line-height:18.6px;white-space:normal;padding:0 3px">路表水作用在路面表面及结构内</div>
  <div class="a td" style="left:243px;top:250.5px;width:93px">块裂（轻）</div>
  <div class="a ci" style="left:348px;top:243px"></div>
  <div class="a ci" style="left:432px;top:243px"></div>
  <div class="a ci" style="left:515px;top:243px"></div>
  <div class="a ci" style="left:599px;top:243px"></div>
  <div class="a ci" style="left:682px;top:243px"></div>
  <div class="a ci" style="left:766px;top:243px"></div>
  <div class="a ci" style="left:849px;top:243px"></div>
  <div class="a ci" style="left:933px;top:243px"></div>
  <div class="a ci" style="left:1016px;top:243px"></div>
  <div class="a ci" style="left:1100px;top:243px"></div>
  <div class="a td" style="left:243px;top:300.0px;width:93px">轻度松散</div>
  <div class="a ci" style="left:348px;top:292px"></div>
  <div class="a ci" style="left:432px;top:292px"></div>
  <div class="a ci" style="left:515px;top:292px">31.00</div>
  <div class="a ci" style="left:599px;top:292px"></div>
  <div class="a ci" style="left:682px;top:292px">60.00</div>
  <div class="a ci" style="left:766px;top:292px">32.00</div>
  <div class="a ci" style="left:849px;top:292px"></div>
  <div class="a ci" style="left:933px;top:292px">10.00</div>
  <div class="a ci" style="left:1016px;top:292px">24.00</div>
  <div class="a ci" style="left:1100px;top:292px">51.00</div>
  <div class="a td" style="left:243px;top:349.0px;width:93px">重度松散</div>
  <div class="a ci" style="left:348px;top:341px">25.00</div>
  <div class="a ci" style="left:432px;top:341px">45.00</div>
  <div class="a ci" style="left:515px;top:341px">20.00</div>
  <div class="a ci" style="left:599px;top:341px">11.00</div>
  <div class="a ci" style="left:682px;top:341px">35.00</div>
  <div class="a ci" style="left:766px;top:341px">90.00</div>
  <div class="a ci" style="left:849px;top:341px">20.00</div>
  <div class="a ci" style="left:933px;top:341px">60.00</div>
  <div class="a ci" style="left:1016px;top:341px">220.00</div>
  <div class="a ci" style="left:1100px;top:341px">80.00</div>
  <div class="a td" style="left:243px;top:398.0px;width:93px">局部块裂</div>
  <div class="a ci" style="left:348px;top:390px">48.00</div>
  <div class="a ci" style="left:432px;top:390px">35.00</div>
  <div class="a ci" style="left:515px;top:390px">42.00</div>
  <div class="a ci" style="left:599px;top:390px">31.00</div>
  <div class="a ci" style="left:682px;top:390px">24.00</div>
  <div class="a ci" style="left:766px;top:390px">18.00</div>
  <div class="a ci" style="left:849px;top:390px">32.00</div>
  <div class="a ci" style="left:933px;top:390px">25.00</div>
  <div class="a ci" style="left:1016px;top:390px">26.00</div>
  <div class="a ci" style="left:1100px;top:390px">30.00</div>
  <div class="a td" style="left:243px;top:447.0px;width:93px">局部龟裂</div>
  <div class="a ci" style="left:348px;top:439px"></div>
  <div class="a ci" style="left:432px;top:439px"></div>
  <div class="a ci" style="left:515px;top:439px"></div>
  <div class="a ci" style="left:599px;top:439px"></div>
  <div class="a ci" style="left:682px;top:439px"></div>
  <div class="a ci" style="left:766px;top:439px"></div>
  <div class="a ci" style="left:849px;top:439px"></div>
  <div class="a ci" style="left:933px;top:439px"></div>
  <div class="a ci" style="left:1016px;top:439px"></div>
  <div class="a ci" style="left:1100px;top:439px"></div>
  <div class="a td" style="left:243px;top:496.0px;width:93px">表面坑槽</div>
  <div class="a ci" style="left:348px;top:488px"></div>
  <div class="a ci" style="left:432px;top:488px"></div>
  <div class="a ci" style="left:515px;top:488px"></div>
  <div class="a ci" style="left:599px;top:488px"></div>
  <div class="a ci" style="left:682px;top:488px"></div>
  <div class="a ci" style="left:766px;top:488px"></div>
  <div class="a ci" style="left:849px;top:488px"></div>
  <div class="a ci" style="left:933px;top:488px"></div>
  <div class="a ci" style="left:1016px;top:488px"></div>
  <div class="a ci" style="left:1100px;top:488px"></div>
  <div class="a td" style="left:243px;top:545.0px;width:93px">局部沉陷</div>
  <div class="a ci" style="left:348px;top:537px"></div>
  <div class="a ci" style="left:432px;top:537px"></div>
  <div class="a ci" style="left:515px;top:537px"></div>
  <div class="a ci" style="left:599px;top:537px"></div>
  <div class="a ci" style="left:682px;top:537px"></div>
  <div class="a ci" style="left:766px;top:537px"></div>
  <div class="a ci" style="left:849px;top:537px"></div>
  <div class="a ci" style="left:933px;top:537px"></div>
  <div class="a ci" style="left:1016px;top:537px"></div>
  <div class="a ci" style="left:1100px;top:537px"></div>
  <div class="a td" style="left:243px;top:594.0px;width:93px">辙槽</div>
  <div class="a ci" style="left:348px;top:586px"></div>
  <div class="a ci" style="left:432px;top:586px"></div>
  <div class="a ci" style="left:515px;top:586px"></div>
  <div class="a ci" style="left:599px;top:586px"></div>
  <div class="a ci" style="left:682px;top:586px"></div>
  <div class="a ci" style="left:766px;top:586px"></div>
  <div class="a ci" style="left:849px;top:586px"></div>
  <div class="a ci" style="left:933px;top:586px"></div>
  <div class="a ci" style="left:1016px;top:586px"></div>
  <div class="a ci" style="left:1100px;top:586px"></div>
  <div class="a td" style="left:243px;top:643.0px;width:93px">反射裂缝</div>
  <div class="a ci" style="left:348px;top:635px">42.00</div>
  <div class="a ci" style="left:432px;top:635px">42.00</div>
  <div class="a ci" style="left:515px;top:635px">42.00</div>
  <div class="a ci" style="left:599px;top:635px">28.00</div>
  <div class="a ci" style="left:682px;top:635px">70.00</div>
  <div class="a ci" style="left:766px;top:635px">42.00</div>
  <div class="a ci" style="left:849px;top:635px">56.00</div>
  <div class="a ci" style="left:933px;top:635px">56.00</div>
  <div class="a ci" style="left:1016px;top:635px">28.00</div>
  <div class="a ci" style="left:1100px;top:635px">28.00</div>
  <div class="a" style="left:1189.0px;top:27.0px;width:18.0px;height:670.0px;background:#efefef"></div>
  <div class="a" style="left:1190.0px;top:62.0px;width:15.0px;height:565.0px;background:#cdcdcd"></div>
  <svg class="a" style="left:1192.0px;top:44.0px" width="12" height="10" viewBox="0 0 12 10"><polyline points="1,8.5 6,3.5 11,8.5" fill="none" stroke="#555" stroke-width="2.8"/></svg>
  <svg class="a" style="left:1192.0px;top:652.0px" width="12" height="10" viewBox="0 0 12 10"><polyline points="1,1.5 6,6.5 11,1.5" fill="none" stroke="#555" stroke-width="2.8"/></svg>
  <div class="a" style="left:1170.0px;top:193.0px;width:18.0px;height:41.0px;background:#f0f0f0"></div>
  <div class="a" style="left:1170.0px;top:232.0px;width:18.0px;height:2.0px;background:#bcc1c8"></div>
  <svg class="a" style="left:1173.5px;top:198.5px" width="12" height="10" viewBox="0 0 12 10"><polyline points="1,8.5 6,3.5 11,8.5" fill="none" stroke="#555" stroke-width="2.8"/></svg>
  <svg class="a" style="left:1173.5px;top:218.0px" width="12" height="10" viewBox="0 0 12 10"><polyline points="1,1.5 6,6.5 11,1.5" fill="none" stroke="#555" stroke-width="2.8"/></svg>
  <div class="a" style="left:1171.0px;top:234.0px;width:17.0px;height:445.0px;background:#efefef"></div>
  <svg class="a" style="left:1173.5px;top:250.5px" width="12" height="10" viewBox="0 0 12 10"><polyline points="1,8.5 6,3.5 11,8.5" fill="none" stroke="#555" stroke-width="2.8"/></svg>
  <div class="a" style="left:1172.0px;top:268.0px;width:15.0px;height:70.5px;background:#cdcdcd"></div>
  <svg class="a" style="left:1173.5px;top:656.0px" width="12" height="10" viewBox="0 0 12 10"><polyline points="1,1.5 6,6.5 11,1.5" fill="none" stroke="#555" stroke-width="2.8"/></svg>
  <div class="a" style="left:0.0px;top:679.0px;width:1188.0px;height:16.0px;background:#efefef"></div>
  <div class="a" style="left:34.0px;top:680.0px;width:1118.0px;height:15.0px;background:#cdcdcd"></div>
  <svg class="a" style="left:16.5px;top:681.5px" width="10" height="12" viewBox="0 0 10 12"><polyline points="8.5,1 3,6 8.5,11" fill="none" stroke="#555" stroke-width="2.8"/></svg>
  <svg class="a" style="left:1162.0px;top:681.5px" width="10" height="12" viewBox="0 0 10 12"><polyline points="1.5,1 7,6 1.5,11" fill="none" stroke="#555" stroke-width="2.8"/></svg>
  <div class="a" style="left:1162.0px;top:662.0px;width:9.0px;height:9.0px;background:#c4c4c4"></div>
  <div class="a" style="left:1173.0px;top:662.0px;width:9.0px;height:9.0px;background:#c4c4c4"></div>
  <div class="a" style="left:1162.0px;top:673.0px;width:9.0px;height:9.0px;background:#c4c4c4"></div>
  <div class="a" style="left:1173.0px;top:673.0px;width:9.0px;height:9.0px;background:#c4c4c4"></div>
  <div class="a" style="left:0.0px;top:695.0px;width:1207.0px;height:2.0px;background:#e6e6e6"></div>
</div>
</body></html>
